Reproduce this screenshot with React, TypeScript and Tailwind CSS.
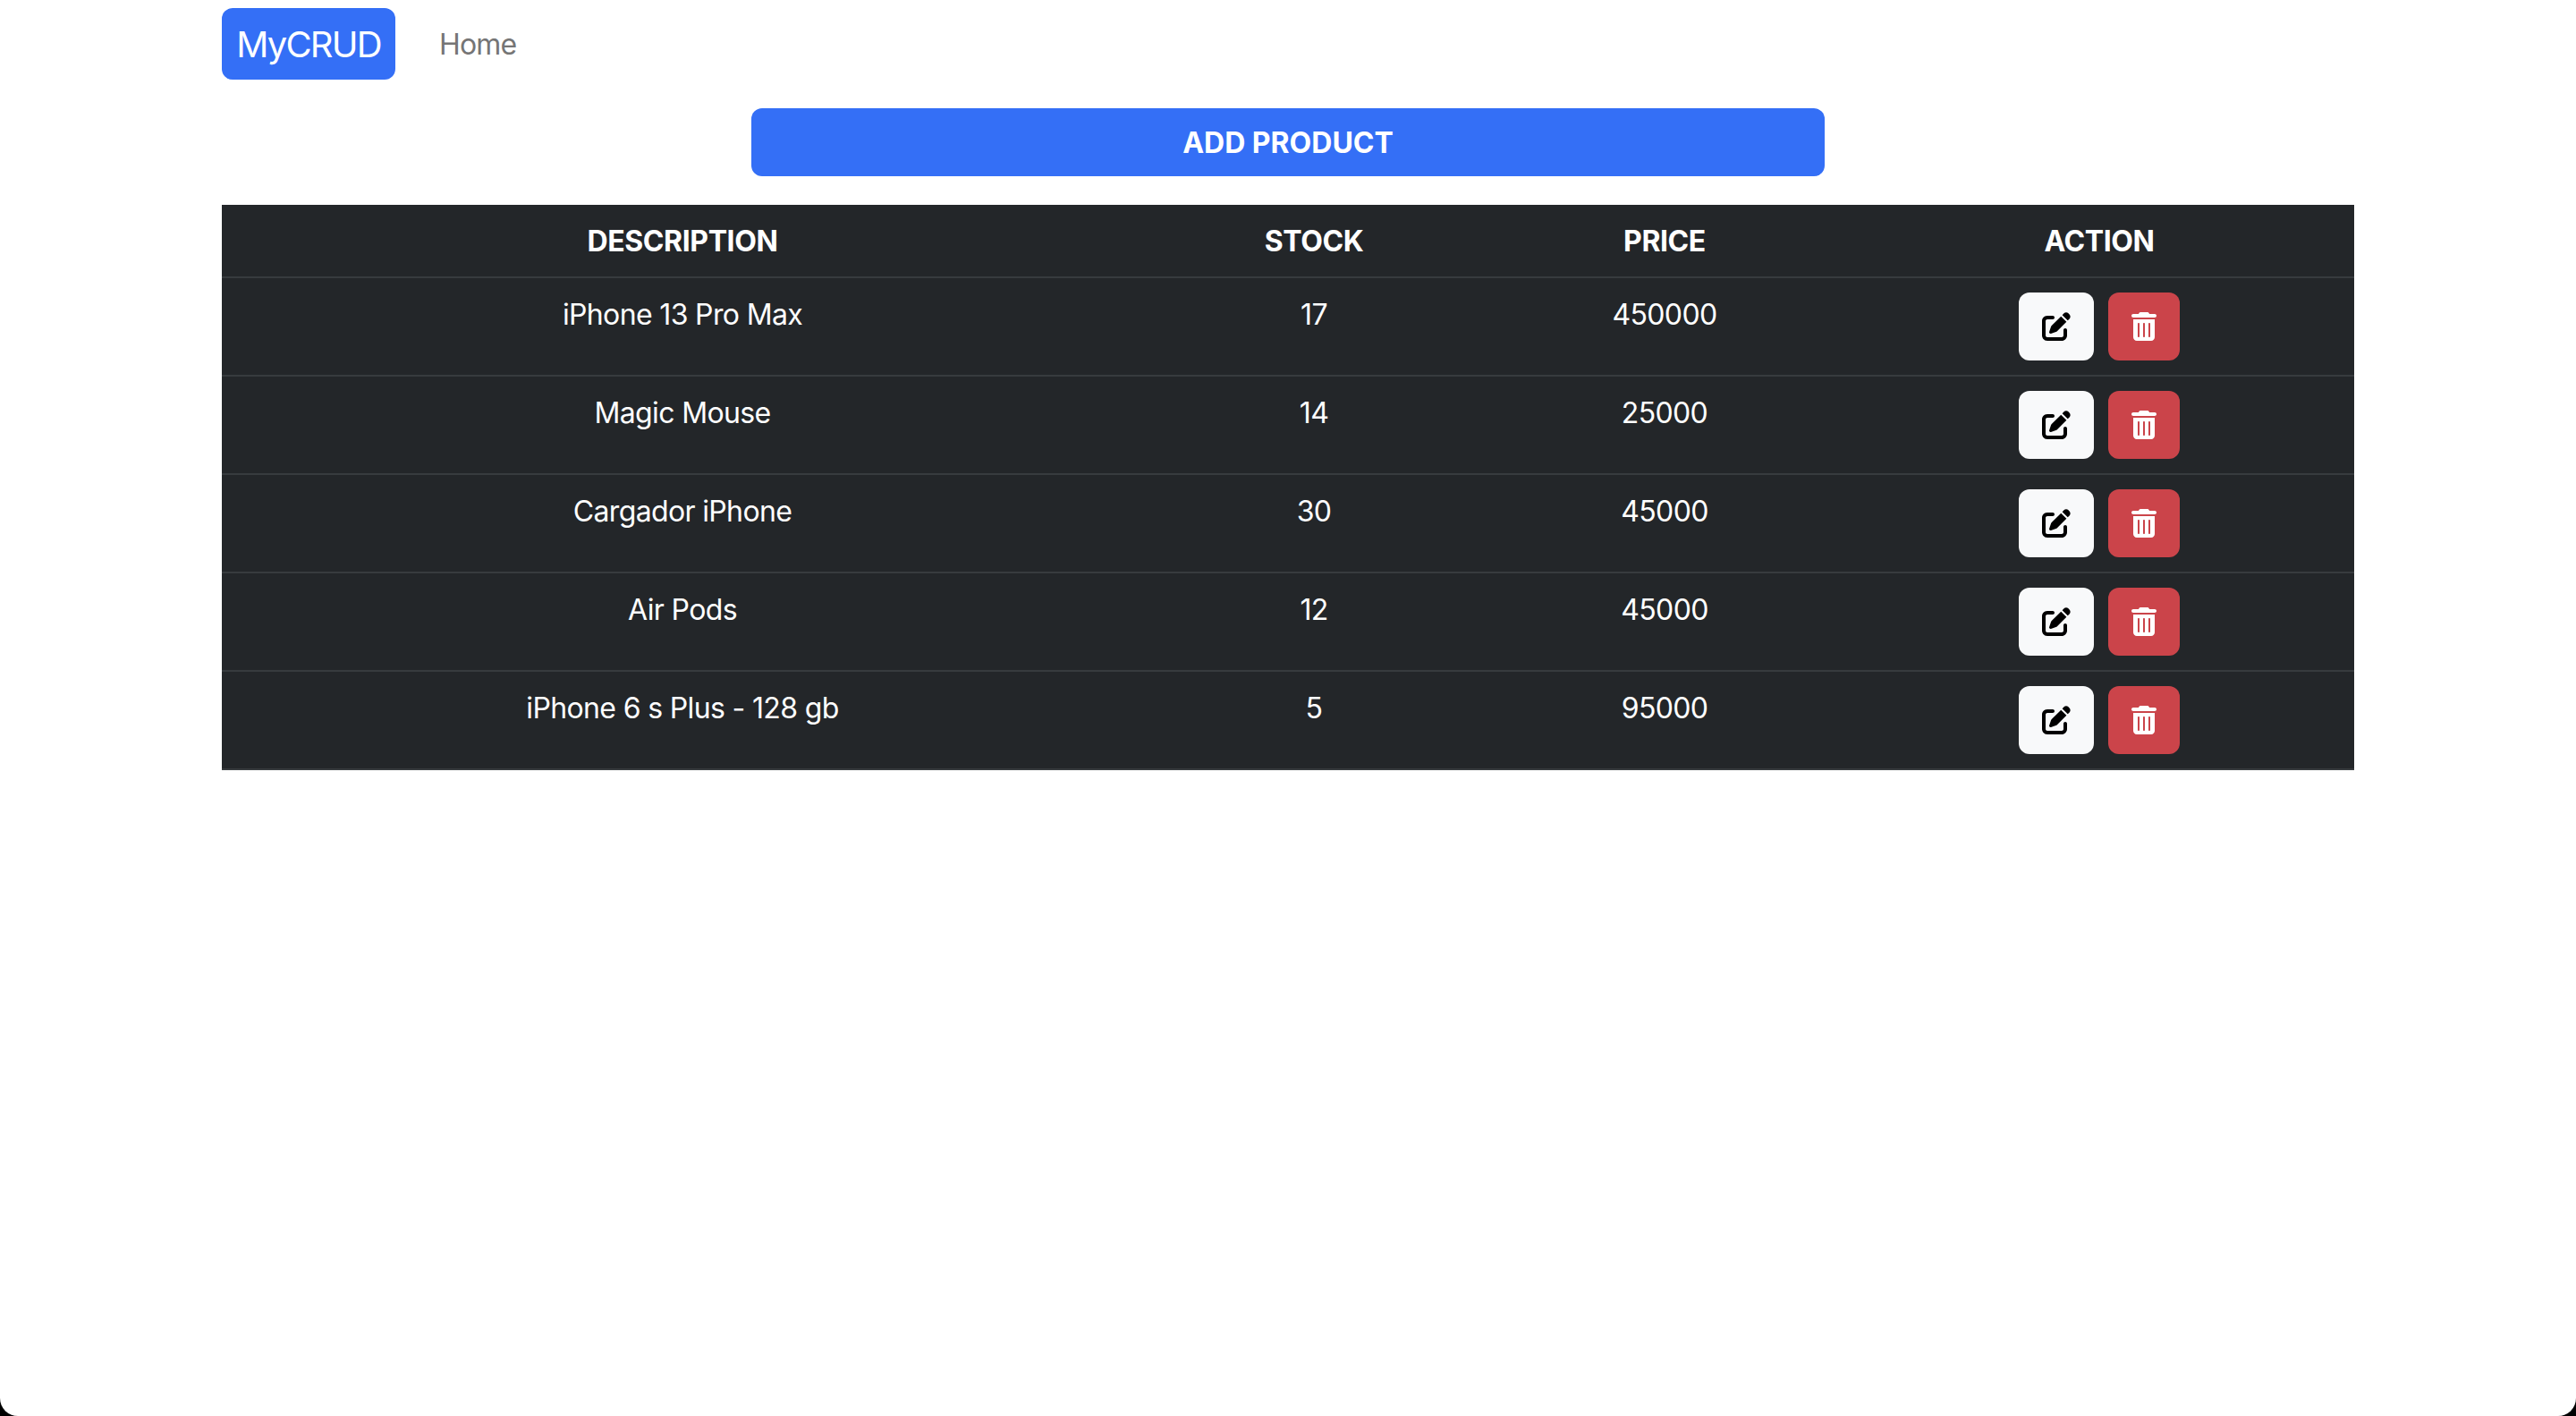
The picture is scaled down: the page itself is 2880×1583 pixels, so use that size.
import { FaPenToSquare, FaTrashCan } from "react-icons/fa6";

const products = [
  { id: 1, description: "iPhone 13 Pro Max", stock: 17, price: 450000 },
  { id: 2, description: "Magic Mouse", stock: 14, price: 25000 },
  { id: 3, description: "Cargador iPhone", stock: 30, price: 45000 },
  { id: 4, description: "Air Pods", stock: 12, price: 45000 },
  { id: 5, description: "iPhone 6 s Plus - 128 gb", stock: 5, price: 95000 },
];

export default function App() {
  return (
    <div className="h-[1583px] overflow-hidden bg-black font-['Inter',sans-serif]">
      <div className="h-full rounded-b-[20px] bg-white px-[248px]">
        {/* Navbar */}
        <nav className="flex items-center pt-[9px]">
          <a href="#" className="flex h-[80px] w-[194px] items-center justify-center rounded-[12px] bg-[#346ff6] pt-[1px] text-[40px] tracking-[-1.8px] text-white">
            MyCRUD
          </a>
          <a href="#" className="ml-[49px] pt-[2px] text-[32px] tracking-[-0.8px] text-[#757575]">
            Home
          </a>
        </nav>

        {/* Add button */}
        <div className="mt-[32px] flex justify-center">
          <button className="h-[76px] w-[1200px] rounded-[12px] bg-[#346ff6] pt-[2px] text-[32px] font-bold text-white">
            ADD PRODUCT
          </button>
        </div>

        {/* Table */}
        <table className="mt-[32px] w-full table-fixed bg-[#232629] text-center text-[32px] tracking-[-0.65px] text-white">
          <thead>
            <tr className="h-[81px] border-b-2 border-[#373b3e] tracking-[-0.4px]">
              <th className="w-[1030px] pt-[2px] font-bold">DESCRIPTION</th>
              <th className="w-[382px] pt-[2px] font-bold">STOCK</th>
              <th className="w-[402px] pt-[2px] font-bold">PRICE</th>
              <th className="pt-[2px] font-bold">ACTION</th>
            </tr>
          </thead>
          <tbody>
            {products.map((p) => (
              <tr key={p.id} className="border-b-2 border-[#373b3e]">
                <td className="h-[110px] pt-[17px] align-top">{p.description}</td>
                <td className="pt-[17px] align-top">{p.stock}</td>
                <td className="pt-[17px] align-top">{p.price}</td>
                <td className="pt-[16px] align-top">
                  <div className="flex justify-center gap-[16px]">
                    <button className="flex h-[76px] w-[84px] items-center justify-center rounded-[12px] bg-[#f8f9fa] text-black">
                      <FaPenToSquare className="h-[32px] w-[32px]" />
                    </button>
                    <button className="flex h-[76px] w-[80px] items-center justify-center rounded-[12px] bg-[#cb444a] text-white">
                      <FaTrashCan className="h-[32px] w-[28px]" />
                    </button>
                  </div>
                </td>
              </tr>
            ))}
          </tbody>
        </table>
      </div>
    </div>
  );
}
